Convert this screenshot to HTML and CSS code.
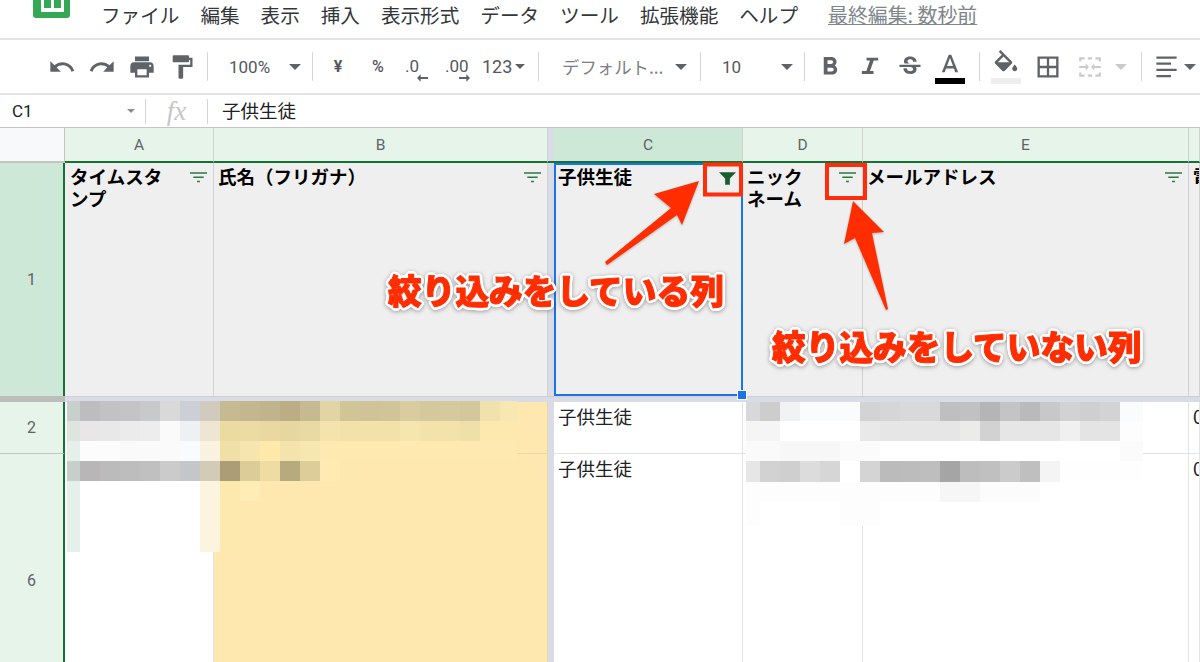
FILE: index.html
```html
<!DOCTYPE html>
<html lang="ja">
<head>
<meta charset="utf-8">
<title>スプレッドシート</title>
<link rel="stylesheet" href="styles.css">
</head>
<body>
<div class="page">
  <header class="menubar">
    <svg class="logo" viewBox="0 0 37 19"><path d="M0 0h37v15a3 3 0 0 1-3 3H3a3 3 0 0 1-3-3z" fill="#34a853"/><path d="M8 0h23v12H8z" fill="#fff"/><path d="M11 0h7v8h-7zM21 0h7v8h-7z" fill="#34a853"/></svg>
    <nav class="menu">
      <span>ファイル</span><span>編集</span><span>表示</span><span>挿入</span><span>表示形式</span><span>データ</span><span>ツール</span><span>拡張機能</span><span>ヘルプ</span>
    </nav>
    <a class="lastedit">最終編集: 数秒前</a>
  </header>

  <div class="toolbar">
    <span class="tb"><svg class="ic" viewBox="0 0 24 24"><path d="M12.5 8c-2.65 0-5.05.99-6.9 2.6L2 7v9h9l-3.62-3.62c1.39-1.16 3.16-1.88 5.12-1.88 3.54 0 6.55 2.31 7.6 5.5l2.37-.78C21.08 11.03 17.15 8 12.5 8z"/></svg></span>
    <span class="tb"><svg class="ic" viewBox="0 0 24 24"><path d="M18.4 10.6C16.55 8.99 14.15 8 11.5 8c-4.65 0-8.58 3.03-9.96 7.22L3.9 16c1.05-3.19 4.05-5.5 7.6-5.5 1.95 0 3.73.72 5.12 1.88L13 16h9V7l-3.6 3.6z"/></svg></span>
    <span class="tb"><svg class="ic" viewBox="0 0 24 24"><path d="M19 8H5c-1.66 0-3 1.34-3 3v6h4v4h12v-4h4v-6c0-1.66-1.34-3-3-3zm-3 11H8v-5h8v5zm3-7c-.55 0-1-.45-1-1s.45-1 1-1 1 .45 1 1-.45 1-1 1zm-1-9H6v4h12V3z"/></svg></span>
    <span class="tb"><svg class="ic" viewBox="0 0 24 24"><path d="M18 4V3c0-.55-.45-1-1-1H5c-.55 0-1 .45-1 1v4c0 .55.45 1 1 1h12c.55 0 1-.45 1-1V6h1v4H9v11c0 .55.45 1 1 1h2c.55 0 1-.45 1-1v-9h8V4h-3z"/></svg></span>
    <i class="sep s1"></i>
    <span class="sel zoomsel"><span>100%</span><b class="caret"></b></span>
    <i class="sep"></i>
    <span class="tb txt yen">¥</span>
    <span class="tb txt pct">%</span>
    <span class="tb dec dec0"><span>.0</span><svg class="arr al" viewBox="0 0 12 8"><path d="M0 4l4-4v3h8v2H4v3z"/></svg></span>
    <span class="tb dec dec2"><span>.00</span><svg class="arr ar" viewBox="0 0 12 8"><path d="M12 4L8 0v3H0v2h8v3z"/></svg></span>
    <span class="sel numsel"><span>123</span><b class="caret"></b></span>
    <i class="sep"></i>
    <span class="sel fontsel"><span>デフォルト...</span><b class="caret"></b></span>
    <i class="sep"></i>
    <span class="sel sizesel"><span>10</span><b class="caret"></b></span>
    <i class="sep"></i>
    <span class="tb"><svg class="ic boldic" viewBox="0 0 24 24"><path d="M15.6 10.79c.97-.67 1.65-1.77 1.65-2.79 0-2.26-1.75-4-4-4H7v14h7.04c2.09 0 3.71-1.7 3.71-3.79 0-1.52-.86-2.82-2.15-3.42zM10 6.5h3c.83 0 1.5.67 1.5 1.5s-.67 1.5-1.5 1.5h-3v-3zm3.5 9H10v-3h3.5c.83 0 1.5.67 1.5 1.5s-.67 1.5-1.5 1.5z"/></svg></span>
    <span class="tb"><svg class="ic" viewBox="0 0 24 24"><path d="M9 4h10v2.500h-3.800L12 15.500h3V18H5v-2.500h3.800L12 6.500H9z"/></svg></span>
    <span class="tb"><svg class="ic" viewBox="0 0 24 24"><path d="M7.24 8.75c-.26-.48-.39-1.03-.39-1.67 0-.61.13-1.16.4-1.67.26-.5.63-.93 1.11-1.29.48-.35 1.05-.63 1.7-.83.66-.19 1.39-.29 2.18-.29.81 0 1.54.11 2.21.34.66.22 1.23.54 1.69.94.47.4.83.88 1.08 1.43.25.55.38 1.15.38 1.81h-3.01c0-.31-.05-.59-.15-.85-.09-.27-.24-.49-.44-.68-.2-.19-.45-.33-.75-.44-.3-.1-.66-.16-1.06-.16-.39 0-.74.04-1.03.13-.29.09-.53.21-.72.36-.19.16-.34.34-.44.55-.1.21-.15.43-.15.66 0 .48.25.88.74 1.21.38.25.77.48 1.41.7H7.39c-.05-.08-.11-.17-.15-.25zM21 12v-2H3v2h9.62c.18.07.4.14.55.2.37.17.66.34.87.51.21.17.35.36.43.57.07.2.11.43.11.69 0 .23-.05.45-.14.66-.09.2-.23.38-.42.53-.19.15-.42.26-.71.35-.29.08-.63.13-1.01.13-.43 0-.83-.04-1.18-.13s-.66-.23-.91-.42c-.25-.19-.45-.44-.59-.75-.14-.31-.25-.76-.25-1.21H6.4c0 .55.08 1.13.24 1.58.16.45.37.85.65 1.21.28.35.6.66.98.92.37.26.78.48 1.22.65.44.17.9.3 1.38.39.48.08.96.13 1.44.13.8 0 1.53-.09 2.18-.28s1.21-.45 1.67-.79c.46-.34.82-.77 1.07-1.27s.38-1.07.38-1.71c0-.6-.1-1.14-.31-1.61-.05-.11-.11-.23-.17-.33H21z"/></svg></span>
    <span class="tb stack"><svg class="ic up" viewBox="0 0 24 24"><path d="M11 3L5.5 17h2.25l1.12-3h6.25l1.12 3h2.25L13 3h-2zm-1.38 9L12 5.67 14.38 12H9.62z"/></svg><b class="swatch black"></b></span>
    <i class="sep s2"></i>
    <span class="tb stack"><svg class="ic up2" viewBox="0 0 24 24"><path d="M16.56 8.94L7.62 0 6.21 1.41l2.38 2.38-5.15 5.15c-.59.59-.59 1.54 0 2.12l5.5 5.5c.29.29.68.44 1.06.44s.77-.15 1.06-.44l5.5-5.5c.59-.58.59-1.53 0-2.12zM5.21 10L10 5.21 14.79 10H5.21zM19 11.5s-2 2.17-2 3.5c0 1.1.9 2 2 2s2-.9 2-2c0-1.33-2-3.5-2-3.5z"/><path d="M4 10h12l-6 6z"/></svg><b class="swatch pale"></b></span>
    <span class="tb grid-b"><svg class="ic" viewBox="0 0 24 24"><path d="M3 3v18h18V3H3zm8 16H5v-6h6v6zm0-8H5V5h6v6zm8 8h-6v-6h6v6zm0-8h-6V5h6v6z"/></svg></span>
    <span class="tb merge"><svg class="ic dim" viewBox="0 0 24 24"><path d="M2 3h5v2H4v2H2zM10 3h4v2h-4zM17 3h5v4h-2V5h-3zM2 17h2v2h3v2H2zM10 19h4v2h-4zM20 17h2v4h-5v-2h3zM2 11h6V8.500l3 3.500-3 3.500V13H2zM22 11h-6V8.500L13 12l3 3.500V13h6z"/></svg></span>
    <b class="caret dimc"></b>
    <i class="sep s3"></i>
    <svg class="ic alignic" viewBox="0 0 24 24"><path d="M3 3h18v2H3zM3 8.500h13v2H3zM3 14h18v2H3zM3 19.500h13v2H3z"/></svg>
    <b class="caret alignc"></b>
  </div>

  <div class="formulabar">
    <span class="namebox"><span>C1</span><b class="caret tiny"></b></span>
    <i class="fsep"></i>
    <span class="fx">fx</span>
    <i class="fsep"></i>
    <span class="fval">子供生徒</span>
  </div>

  <div class="sheet">
    <div class="corner"></div>
    <div class="ch">A</div>
    <div class="ch">B</div>
    <div class="fz fzh"></div>
    <div class="ch active">C</div>
    <div class="ch">D</div>
    <div class="ch">E</div>
    <div class="ch"></div>

    <div class="rh active">1</div>
    <div class="hc first"><span>タイムスタ<br>ンプ</span><svg class="filt" viewBox="0 0 18 11"><path d="M0 0h18v1.500H0zM3.500 4.500h11V6h-11zM7.500 9h3v1.500h-3z"/></svg></div>
    <div class="hc"><span>氏名（フリガナ）</span><svg class="filt" viewBox="0 0 18 11"><path d="M0 0h18v1.500H0zM3.500 4.500h11V6h-11zM7.500 9h3v1.500h-3z"/></svg></div>
    <div class="fz"></div>
    <div class="hc selected"><span>子供生徒</span><svg class="filt on" viewBox="0 0 18 13"><path d="M0 0h18l-6.500 6.500V13h-5V6.500z"/></svg><b class="handle"></b></div>
    <div class="hc"><span>ニック<br>ネーム</span><svg class="filt" viewBox="0 0 18 11"><path d="M0 0h18v1.500H0zM3.500 4.500h11V6h-11zM7.500 9h3v1.500h-3z"/></svg></div>
    <div class="hc"><span>メールアドレス</span><svg class="filt" viewBox="0 0 18 11"><path d="M0 0h18v1.500H0zM3.500 4.500h11V6h-11zM7.500 9h3v1.500h-3z"/></svg></div>
    <div class="hc clip"><span>電話番号</span></div>

    <div class="rsplit"></div>
    <div class="csplit"></div>

    <div class="rh">2</div>
    <div class="c"></div>
    <div class="c y"></div>
    <div class="fz"></div>
    <div class="c">子供生徒</div>
    <div class="c"></div>
    <div class="c"></div>
    <div class="c clip">0</div>

    <div class="rh">6</div>
    <div class="c"></div>
    <div class="c y"></div>
    <div class="fz"></div>
    <div class="c">子供生徒</div>
    <div class="c"></div>
    <div class="c"></div>
    <div class="c clip">0</div>
  </div>

  <svg class="mosaic m1" viewBox="67 401 482 151" shape-rendering="crispEdges">
    <rect x="67" y="401" width="13" height="20" fill="#c9cfcb"/><rect x="80" y="401" width="20" height="20" fill="#bdbcbf"/><rect x="100" y="401" width="20" height="20" fill="#c2c1c4"/><rect x="120" y="401" width="20" height="20" fill="#c4c4c6"/><rect x="140" y="401" width="20" height="20" fill="#c8c9cb"/><rect x="160" y="401" width="20" height="20" fill="#d9d9da"/><rect x="180" y="401" width="20" height="20" fill="#cdcfd6"/><rect x="200" y="401" width="20" height="20" fill="#d0cbbc"/><rect x="220" y="401" width="20" height="20" fill="#c5ba90"/><rect x="240" y="401" width="20" height="20" fill="#c2b78f"/><rect x="260" y="401" width="20" height="20" fill="#bfb48c"/><rect x="280" y="401" width="20" height="20" fill="#bbae85"/><rect x="300" y="401" width="20" height="20" fill="#c5ba90"/><rect x="320" y="401" width="20" height="20" fill="#e1d5a5"/><rect x="340" y="401" width="20" height="20" fill="#d0c597"/><rect x="360" y="401" width="20" height="20" fill="#cfc397"/><rect x="380" y="401" width="20" height="20" fill="#d0c599"/><rect x="400" y="401" width="20" height="20" fill="#d9cda0"/><rect x="420" y="401" width="20" height="20" fill="#d4c99c"/><rect x="440" y="401" width="20" height="20" fill="#d5ca9e"/><rect x="460" y="401" width="20" height="20" fill="#d3c89c"/><rect x="480" y="401" width="20" height="20" fill="#f0e2ad"/><rect x="500" y="401" width="17" height="20" fill="#f6e7b3"/>
    <rect x="67" y="421" width="13" height="20" fill="#dde5df"/><rect x="80" y="421" width="20" height="20" fill="#e8e6e7"/><rect x="100" y="421" width="20" height="20" fill="#e8e8e8"/><rect x="120" y="421" width="20" height="20" fill="#ebebeb"/><rect x="140" y="421" width="20" height="20" fill="#ededed"/><rect x="160" y="421" width="20" height="20" fill="#fafafa"/><rect x="180" y="421" width="20" height="20" fill="#eff0f4"/><rect x="200" y="421" width="20" height="20" fill="#eee6d3"/><rect x="220" y="421" width="20" height="20" fill="#ecdba0"/><rect x="240" y="421" width="20" height="20" fill="#ecdba2"/><rect x="260" y="421" width="20" height="20" fill="#e9d9a0"/><rect x="280" y="421" width="20" height="20" fill="#e5d79f"/><rect x="300" y="421" width="20" height="20" fill="#e9d9a2"/><rect x="320" y="421" width="20" height="20" fill="#f4e3ac"/><rect x="340" y="421" width="60" height="20" fill="#f2e2aa"/><rect x="400" y="421" width="20" height="20" fill="#f5e5ae"/><rect x="420" y="421" width="40" height="20" fill="#f3e3ab"/><rect x="460" y="421" width="20" height="20" fill="#efdfa9"/><rect x="480" y="421" width="37" height="20" fill="#fde8ae"/>
    <rect x="67" y="441" width="13" height="20" fill="#e6efe9"/><rect x="80" y="441" width="40" height="20" fill="#fcfcfc"/><rect x="120" y="441" width="60" height="20" fill="#fafafa"/><rect x="180" y="441" width="20" height="20" fill="#fafbff"/><rect x="200" y="441" width="20" height="20" fill="#f9f2e0"/><rect x="220" y="441" width="20" height="20" fill="#f0dfa6"/><rect x="240" y="441" width="20" height="20" fill="#f6e5ae"/><rect x="260" y="441" width="20" height="20" fill="#fee9ab"/><rect x="280" y="441" width="20" height="20" fill="#f4e3ac"/><rect x="300" y="441" width="20" height="20" fill="#f6e6b0"/><rect x="320" y="441" width="197" height="20" fill="#fee9b0"/>
    <rect x="67" y="461" width="13" height="20" fill="#c7cfca"/><rect x="80" y="461" width="20" height="20" fill="#b9b6b7"/><rect x="100" y="461" width="20" height="20" fill="#bbbbbb"/><rect x="120" y="461" width="20" height="20" fill="#bdbdbd"/><rect x="140" y="461" width="20" height="20" fill="#c0c0c0"/><rect x="160" y="461" width="20" height="20" fill="#cbcbcb"/><rect x="180" y="461" width="20" height="20" fill="#c4c6ca"/><rect x="200" y="461" width="20" height="20" fill="#d2cbb8"/><rect x="220" y="461" width="20" height="20" fill="#ab9d75"/><rect x="240" y="461" width="20" height="20" fill="#dbcc98"/><rect x="260" y="461" width="20" height="20" fill="#eedca2"/><rect x="280" y="461" width="20" height="20" fill="#b7aa7e"/><rect x="300" y="461" width="20" height="20" fill="#dccd99"/><rect x="320" y="461" width="20" height="20" fill="#ffebb2"/><rect x="340" y="461" width="20" height="20" fill="#fde8b0"/>
    <rect x="67" y="481" width="13" height="71" fill="#e6f0ea"/><rect x="200" y="481" width="20" height="71" fill="#fdf4df"/><rect x="220" y="481" width="20" height="71" fill="#fde8ae"/><rect x="240" y="481" width="20" height="20" fill="#ffedb5"/>
  </svg>

  <svg class="mosaic m2" viewBox="746 402 397 124" shape-rendering="crispEdges">
    <rect x="746" y="402" width="14" height="19" fill="#d8d8da"/><rect x="760" y="402" width="20" height="19" fill="#cdcecc"/><rect x="780" y="402" width="20" height="19" fill="#f1f2f3"/><rect x="800" y="402" width="60" height="19" fill="#fafbfc"/><rect x="860" y="402" width="20" height="19" fill="#d3d3d4"/><rect x="880" y="402" width="20" height="19" fill="#d6d6d7"/><rect x="900" y="402" width="40" height="19" fill="#d9d9da"/><rect x="940" y="402" width="20" height="19" fill="#bfbfc0"/><rect x="960" y="402" width="20" height="19" fill="#c1c1c2"/><rect x="980" y="402" width="20" height="19" fill="#b5b5b6"/><rect x="1000" y="402" width="20" height="19" fill="#c4c4c5"/><rect x="1020" y="402" width="20" height="19" fill="#bababb"/><rect x="1040" y="402" width="20" height="19" fill="#c8c8c9"/><rect x="1060" y="402" width="20" height="19" fill="#d2d2d3"/><rect x="1080" y="402" width="20" height="19" fill="#cfcfd0"/><rect x="1100" y="402" width="20" height="19" fill="#d3d3d4"/><rect x="1120" y="402" width="23" height="19" fill="#fafbfc"/>
    <rect x="746" y="421" width="34" height="20" fill="#f5f5f5"/><rect x="780" y="421" width="80" height="20" fill="#fff"/><rect x="860" y="421" width="20" height="20" fill="#e9e9e9"/><rect x="880" y="421" width="80" height="20" fill="#e6e6e6"/><rect x="960" y="421" width="20" height="20" fill="#ebebe9"/><rect x="980" y="421" width="20" height="20" fill="#d2d2d2"/><rect x="1000" y="421" width="60" height="20" fill="#e6e6e6"/><rect x="1060" y="421" width="20" height="20" fill="#f0f0f0"/><rect x="1080" y="421" width="40" height="20" fill="#e4e4e4"/><rect x="1120" y="421" width="23" height="20" fill="#fdfdfd"/>
    <rect x="746" y="441" width="34" height="20" fill="#fafafa"/><rect x="780" y="441" width="60" height="20" fill="#f7f7f7"/><rect x="840" y="441" width="40" height="20" fill="#fbfbfb"/><rect x="880" y="441" width="240" height="20" fill="#fff"/><rect x="1120" y="441" width="23" height="20" fill="#fbfbfb"/>
    <rect x="746" y="461" width="14" height="21" fill="#e6e6e6"/><rect x="760" y="461" width="20" height="21" fill="#d2d2d2"/><rect x="780" y="461" width="20" height="21" fill="#cfcfcf"/><rect x="800" y="461" width="20" height="21" fill="#dcdcdc"/><rect x="820" y="461" width="20" height="21" fill="#d6d6d6"/><rect x="840" y="461" width="20" height="21" fill="#fff"/><rect x="860" y="461" width="20" height="21" fill="#d4d4d4"/><rect x="880" y="461" width="20" height="21" fill="#bbbbbb"/><rect x="900" y="461" width="20" height="21" fill="#bcbcbc"/><rect x="920" y="461" width="20" height="21" fill="#bebebe"/><rect x="940" y="461" width="20" height="21" fill="#a5a5a5"/><rect x="960" y="461" width="20" height="21" fill="#bdbdbd"/><rect x="980" y="461" width="20" height="21" fill="#c0c0c0"/><rect x="1000" y="461" width="20" height="21" fill="#cbcbcb"/><rect x="1020" y="461" width="20" height="21" fill="#bfbfbf"/><rect x="1040" y="461" width="20" height="21" fill="#f4f4f4"/><rect x="1060" y="461" width="83" height="21" fill="#fefefe"/>
    <rect x="746" y="482" width="194" height="20" fill="#fdfdfd"/><rect x="940" y="482" width="40" height="20" fill="#f6f6f6"/><rect x="980" y="482" width="60" height="20" fill="#fcfcfc"/>
    <rect x="746" y="502" width="14" height="24" fill="#fdfdfd"/><rect x="840" y="502" width="40" height="24" fill="#fdfdfd"/>
  </svg>

  <svg class="marks" viewBox="0 0 1200 662">
    <rect class="box" x="705" y="164.500" width="36" height="30"/>
    <rect class="box" x="827" y="165" width="38" height="33"/>
    <polygon class="arrow" points="699,181 654,194 671,208 605,262 607,265 677,215 682,225"/>
    <polygon class="arrow" points="853,201 884,232 872,233 888,309 886,310 855,238 844,244"/>
  </svg>
  <div class="note n1">絞り込みをしている列</div>
  <div class="note n2">絞り込みをしていない列</div>
</div>
</body>
</html>
```
FILE: styles.css
```css
* { box-sizing: border-box; }
html, body { margin: 0; padding: 0; background: #fff; }
.page {
  position: relative;
  width: 1200px;
  height: 662px;
  overflow: hidden;
  font-family: "Noto Sans CJK JP", "Noto Sans", sans-serif;
  color: #202124;
}

/* menu bar */
.menubar {
  height: 40px;
  border-bottom: 2px solid #e2e3e8;
  display: flex;
  align-items: flex-start;
  padding-left: 33px;
}
.logo { width: 37px; height: 19px; flex: none; margin-right: 31px; }
.menu { display: flex; gap: 21px; font-size: 19.600px; line-height: 29px; color: #33373a; white-space: nowrap; }
.lastedit {
  margin-left: 30px;
  font-size: 19.900px;
  line-height: 29px;
  color: #80868b;
  text-decoration: underline;
  white-space: nowrap;
}

/* tool bar */
.toolbar {
  height: 55px;
  border-bottom: 2px solid #e4e4e6;
  display: flex;
  align-items: center;
  padding: 0 0 0 42px;
  font-family: Roboto, sans-serif;
  font-size: 17px;
  color: #54585d;
  white-space: nowrap;
}
.tb { width: 40px; height: 40px; flex: none; display: flex; align-items: center; justify-content: center; }
.ic { width: 28px; height: 28px; fill: #5f6368; display: block; flex: none; }
.ic.boldic { width: 30px; height: 30px; }
.ic.dim { fill: #c8cacc; width: 26px; height: 26px; }
.sep { width: 1px; height: 29px; background: #d5d6d8; flex: none; margin: 0 5px; }
.sep.s1 { margin: 0 0 0 5px; }
.sep.s2 { margin: 0 6px 0 9px; }
.sep.s3 { margin: 0 11px 0 14px; }
.caret {
  width: 0; height: 0; flex: none; display: block;
  border-left: 6px solid transparent;
  border-right: 6px solid transparent;
  border-top: 6px solid #5f6368;
}
.caret.tiny { border-width: 4px 4px 0; border-top-color: #8a8d91; }
.caret.dimc { border-top-color: #c8cacc; margin-left: 5px; }
.caret.alignc { margin-left: 4px; }
.sel { display: flex; align-items: center; justify-content: space-between; flex: none; }
.zoomsel { width: 104px; padding: 0 11px 0 21px; margin-right: -5px; }
.numsel { width: 43px; margin-left: 4px; margin-right: 8px; font-size: 18px; }
.numsel .caret { border-width: 5px 5px 0; }
.fontsel { width: 156px; padding: 0 8px 0 23px; font-family: "Noto Sans CJK JP", sans-serif; font-size: 17.400px; color: #7c8084; margin-left: -5px; }
.sizesel { width: 98px; padding: 0 6px 0 21px; margin-left: -5px; }
.yen { font-size: 16px; font-weight: 700; }
.pct { font-size: 16px; font-weight: 500; }
.dec { flex-direction: column; align-items: flex-start; line-height: 18px; padding-top: 6px; }
.dec0 { padding-left: 7px; }
.dec2 { padding-left: 7px; }
.arr { width: 11px; height: 8px; fill: #5f6368; display: block; margin-top: -1px; }
.arr.al { margin-left: 12px; }
.arr.ar { margin-left: 14px; }
.stack { flex-direction: column; justify-content: flex-start; }
.ic.up { width: 30px; height: 30px; margin-top: 4px; }
.ic.up2 { width: 30px; height: 30px; margin-top: 3px; }
.swatch { width: 30px; height: 6px; display: block; }
.up + .swatch { margin-top: -3px; }
.up2 + .swatch { margin-top: -2px; }
.swatch.black { background: #000; }
.swatch.pale { background: #eeeeee; }
.grid-b { margin-left: 2px; }
.merge { margin-left: 2px; }
.alignic { width: 27px; height: 27px; }

/* formula bar */
.formulabar {
  height: 33px;
  border-bottom: 1px solid #c4c4c4;
  display: flex;
  align-items: center;
  font-size: 18.500px;
  line-height: 30px;
  color: #202124;
}
.namebox { width: 145px; padding: 0 10px 0 12px; display: flex; align-items: center; justify-content: space-between; font-family: Roboto, sans-serif; font-size: 17px; }
.fsep { width: 1px; height: 25px; background: #d5d6d8; flex: none; }
.fx { width: 61px; text-align: center; font-family: "Liberation Serif", serif; font-style: italic; font-size: 27px; line-height: 30px; color: #c4c6c8; }
.fval { margin-left: 14px; margin-bottom: 2px; white-space: nowrap; }

/* sheet */
.sheet {
  display: grid;
  grid-template-columns: 65px 149px 334px 6px 189px 120px 326px 1fr;
  grid-template-rows: 35px 233px 6px 52px 254px;
  font-size: 18.500px;
  line-height: 22px;
}
.corner { background: #f8f9fa; border-right: 1px solid #c4c4c4; border-bottom: 2px solid #c4c4c4; }
.ch {
  background: #e6f4ea;
  border-right: 1px solid #d0d3d0;
  border-bottom: 2px solid #137333;
  display: flex; align-items: center; justify-content: center;
  font-family: Roboto, sans-serif;
  font-size: 15.500px;
  color: #5f6368;
}
.ch.active { background: #cee8d7; }
.fzh { background: #bdbdbd; border-bottom: 2px solid #137333; }
.fz { background: #d9dce7; }
.rh {
  background: #e6f4ea;
  border-right: 2px solid #137333;
  border-bottom: 1px solid #c0c6c0;
  display: flex; align-items: center; justify-content: center;
  font-family: Roboto, sans-serif;
  font-size: 16px;
  color: #5f6368;
}
.rh.active { background: #cee8d7; border-bottom: 0; }
.hc {
  position: relative;
  background: #efefef;
  border-right: 1px solid #d2d2d2;
  padding: 2px 6px 0 4px;
  display: flex;
  justify-content: space-between;
  align-items: flex-start;
  font-weight: 700;
  color: #000;
  white-space: nowrap;
}
.hc.first { padding-left: 5px; }
.clip { overflow: hidden; }
.filt { width: 17px; height: 11px; fill: #2b7a43; flex: none; margin-top: 7px; }
.filt.on { width: 17px; height: 13px; fill: #1a5c2e; margin-top: 7px; }
.selected { border: 2px solid #1a73e8; padding: 0 5px 0 2px; }
.handle { position: absolute; right: -6px; bottom: -6px; width: 10px; height: 10px; background: #1a73e8; border: 1px solid #fff; z-index: 2; }
.rsplit { grid-column: 1 / 2; background: #bdbdbd; }
.csplit { grid-column: 2 / -1; background: #d9dce7; border-top: 1px solid #cfd0d2; }
.c {
  background: #fff;
  border-right: 1px solid #e2e3e3;
  border-bottom: 1px solid #e2e3e3;
  padding: 3px 5px 0 4px;
  white-space: nowrap;
}
.c.y { background: #fee8b0; border-right-color: #e8d8a8; border-bottom-color: #e8d8a8; }

/* pixelated data */
.mosaic { position: absolute; display: block; }
.m1 { left: 67px; top: 401px; width: 482px; height: 151px; }
.m2 { left: 746px; top: 402px; width: 397px; height: 124px; }

/* annotations */
.marks { position: absolute; left: 0; top: 0; width: 1200px; height: 662px; }
.box { fill: none; stroke: #ff2d0b; stroke-width: 4px; }
.arrow { fill: #ff2d00; filter: drop-shadow(0 1px 1px rgba(0,0,0,.25)); }
.note {
  position: absolute;
  font-size: 33.700px;
  line-height: 40px;
  font-weight: 900;
  color: #ff2d00;
  white-space: nowrap;
  -webkit-text-stroke: 1px #ff2d00;
  text-shadow: 3px 0 0 #fff, -3px 0 0 #fff, 0 3px 0 #fff, 0 -3px 0 #fff, 2px 2px 0 #fff, -2px 2px 0 #fff, 2px -2px 0 #fff, -2px -2px 0 #fff, 3px 1px 0 #fff, -3px 1px 0 #fff, 3px -1px 0 #fff, -3px -1px 0 #fff, 1px 3px 0 #fff, -1px 3px 0 #fff, 1px -3px 0 #fff, -1px -3px 0 #fff;
  filter: drop-shadow(0 1px 2px rgba(0,0,0,.35));
}
.n1 { left: 388px; top: 270px; }
.n2 { left: 772px; top: 326px; }
```
